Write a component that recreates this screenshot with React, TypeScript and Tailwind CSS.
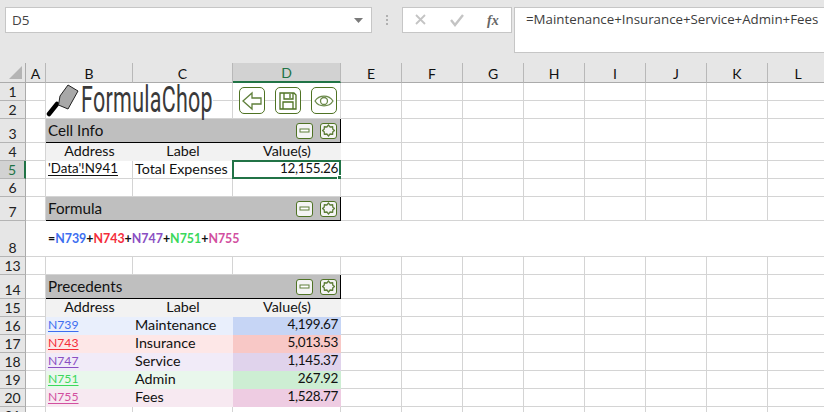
import type { ReactNode } from 'react';

const COLS = ['A', 'B', 'C', 'D', 'E', 'F', 'G', 'H', 'I', 'J', 'K', 'L', 'M'];

const PRECEDENTS = [
  { row: 16, addr: 'N739', label: 'Maintenance', value: '4,199.67', link: 'text-[#3d6ef0]', light: 'bg-[#e9effc]', dark: 'bg-[#c6d5f5]' },
  { row: 17, addr: 'N743', label: 'Insurance', value: '5,013.53', link: 'text-[#f42d3a]', light: 'bg-[#fde7e7]', dark: 'bg-[#f8c8c6]' },
  { row: 18, addr: 'N747', label: 'Service', value: '1,145.37', link: 'text-[#8a4fc3]', light: 'bg-[#f1ebf8]', dark: 'bg-[#e0d3ec]' },
  { row: 19, addr: 'N751', label: 'Admin', value: '267.92', link: 'text-[#3bd85b]', light: 'bg-[#e9f7ec]', dark: 'bg-[#cdeed3]' },
  { row: 20, addr: 'N755', label: 'Fees', value: '1,528.77', link: 'text-[#d24f9f]', light: 'bg-[#f7e9f1]', dark: 'bg-[#eecce2]' },
];

function RowHead({ n, active }: { n: number; active?: boolean }) {
  return (
    <div
      className={`flex items-end justify-center text-[14px] leading-[17px] border-b border-[#b4b4b4] ${
        active
          ? 'bg-[#d2d2d2] text-[#217346] border-r-2 border-r-[#217346]'
          : 'bg-[#e6e6e6] text-[#222] border-r border-r-[#ababab]'
      }`}
    >
      {n}
    </div>
  );
}

function Blank({ children, className = '' }: { children?: ReactNode; className?: string }) {
  return <div className={`relative bg-white border-r border-b border-[#d4d4d4] ${className}`}>{children}</div>;
}

function Blanks({ count }: { count: number }) {
  return (
    <>
      {Array.from({ length: count }, (_, i) => (
        <Blank key={i} />
      ))}
    </>
  );
}

function TableHead() {
  return (
    <>
      <div className="flex items-center justify-center bg-[#f2f2f2] pb-[4px]">Address</div>
      <div className="flex items-center justify-center bg-[#f2f2f2] pb-[4px]">Label</div>
      <div className="flex items-center justify-center bg-[#f2f2f2] pb-[4px]">Value(s)</div>
    </>
  );
}

function SmallButton({ children }: { children: ReactNode }) {
  return (
    <div className="flex h-[16px] w-[17px] items-center justify-center rounded-[3px] border border-[#4f7324] bg-[#f4f4f4]">
      {children}
    </div>
  );
}

function TitleBar({ title }: { title: string }) {
  return (
    <div className="col-span-3 -ml-px -mt-px flex items-center justify-between border border-black bg-[#bfbfbf] pl-[2px] pr-[3px] text-[15.200px]">
      <span>{title}</span>
      <div className="flex gap-[7px]">
        <SmallButton>
          <svg width="11" height="5" viewBox="0 0 11 5">
            <rect x="1" y="1" width="9" height="3" fill="#fff" stroke="#5f7f3a" />
          </svg>
        </SmallButton>
        <SmallButton>
          <svg width="13" height="13" viewBox="0 0 24 24" fill="none" stroke="#5f7f3a" strokeWidth="2.5">
            <path d="M12 2l3 3.5 4.5-.5.5 4.5L23 12l-3 2.500-.5 4.500-4.500-.5L12 22l-3-3.500-4.500.5-.5-4.500L1 12l3-2.500.5-4.500 4.500.5z" />
          </svg>
        </SmallButton>
      </div>
    </div>
  );
}

function ToolButton({ children }: { children: ReactNode }) {
  return (
    <div className="flex h-[27px] w-[26px] items-center justify-center rounded-[5px] border border-[#4f7324] bg-white">
      {children}
    </div>
  );
}

function Logo() {
  return (
    <div className="absolute left-0 top-0 z-10 flex h-[35px] w-[167px] items-start bg-white">
      <svg width="34" height="35" viewBox="0 0 34 35" className="shrink-0">
        <path d="M3 31 L11 21" stroke="#000" strokeWidth="4.5" strokeLinecap="round" />
        <path d="M12.500 22 L14 13 L22 2 L32 8 L22 26 Z" fill="#a8a8a8" stroke="#222" strokeWidth="1" />
      </svg>
      <span className="ml-[1px] origin-left scale-x-[0.58] text-[37px] leading-[34px] tracking-[0.5px] text-[#3a3a3a] [font-family:Roboto,sans-serif]">
        FormulaChop
      </span>
    </div>
  );
}

function CellLink({ children, className = '' }: { children: ReactNode; className?: string }) {
  return <span className={`underline underline-offset-2 ${className}`}>{children}</span>;
}

function Num({ children }: { children: ReactNode }) {
  return <span className="text-[13.500px] tracking-[-0.35px]">{children}</span>;
}

export default function App() {
  return (
    <div className="flex h-[412px] w-[824px] flex-col overflow-hidden bg-[#e6e6e6] text-[14.300px] leading-[17px] text-[#111] [font-family:Lato,sans-serif]">
      {/* ribbon: name box + formula bar */}
      <div className="flex h-[63px] shrink-0 items-start pl-[5px] pt-[7px] text-[13.500px] text-[#444] [font-family:'Open_Sans',sans-serif]">
        <div className="flex h-[26px] w-[367px] items-center justify-between border border-[#c6c6c6] bg-white pl-[6px] pr-[8px]">
          <span>D5</span>
          <svg width="9" height="5" viewBox="0 0 9 5">
            <path d="M0 0h9L4.500 5z" fill="#7a7a7a" />
          </svg>
        </div>
        <div className="flex h-[26px] w-[30px] flex-col items-center justify-center gap-[2px]">
          <i className="h-[2px] w-[2px] bg-[#b0b0b0]" />
          <i className="h-[2px] w-[2px] bg-[#b0b0b0]" />
          <i className="h-[2px] w-[2px] bg-[#b0b0b0]" />
        </div>
        <div className="flex h-[26px] w-[110px] items-center border border-[#c6c6c6] bg-white">
          <svg width="108" height="24" viewBox="0 0 108 24">
            <path d="M13 7l9 9M22 7l-9 9" stroke="#c4c4c4" strokeWidth="1.800" fill="none" />
            <path d="M48 12l4 5 8-10" stroke="#c4c4c4" strokeWidth="2.400" fill="none" />
            <text x="84" y="17" fontSize="14" fontStyle="italic" fontWeight="700" fontFamily="Liberation Serif, serif" fill="#666">
              fx
            </text>
          </svg>
        </div>
        <div className="ml-[2px] flex h-[46px] flex-1 border border-r-0 border-[#c6c6c6] bg-white pl-[11px] pt-[3px] text-[13.300px] text-[#3d3d3d]">
          =Maintenance+Insurance+Service+Admin+Fees
        </div>
      </div>

      {/* sheet */}
      <div className="grid grid-cols-[26px_20px_87px_100px_108px_repeat(9,61px)] grid-rows-[20px_18px_18px_24px_18px_18px_18px_24px_36px_18px_24px_18px_18px_18px_18px_18px_18px_18px]">
        {/* column headers */}
        <div className="relative border-r border-b border-[#ababab]">
          <svg width="14" height="14" viewBox="0 0 14 14" className="absolute left-[9px] top-[3px]">
            <path d="M13 0v13H0z" fill="#b4b4b4" />
          </svg>
        </div>
        {COLS.map((c) => (
          <div
            key={c}
            className={`flex items-end justify-center border-r border-[#b8b8b8] text-[14px] leading-[17px] ${
              c === 'D'
                ? 'border-b-2 border-b-[#217346] bg-[#d2d2d2] text-[#217346]'
                : 'border-b border-b-[#ababab] text-[#111]'
            }`}
          >
            {c}
          </div>
        ))}

        {/* rows 1-2: logo and toolbar */}
        <RowHead n={1} />
        <Blank />
        <Blank>
          <Logo />
        </Blank>
        <Blank />
        <Blank>
          <div className="absolute left-[6px] top-[4px] z-10 flex gap-[10px]">
            <ToolButton>
              <svg width="22" height="20" viewBox="0 0 22 20" fill="none" stroke="#5f7f3a" strokeWidth="1.300">
                <path d="M2 10l9-8v5h9v6h-9v5z" />
              </svg>
            </ToolButton>
            <ToolButton>
              <svg width="20" height="20" viewBox="0 0 20 20" fill="none" stroke="#4f7324" strokeWidth="1.300">
                <path d="M2 2h14l2 2v14H2z" />
                <path d="M6 2v6h9V2M12 3v4" />
                <path d="M5 18v-7h10v7" />
              </svg>
            </ToolButton>
            <ToolButton>
              <svg width="20" height="14" viewBox="0 0 20 14" fill="none" stroke="#6b8a4a" strokeWidth="1.300">
                <path d="M1 7c4-6.500 14-6.500 18 0-4 6.500-14 6.500-18 0z" />
                <circle cx="10" cy="7" r="3.500" />
              </svg>
            </ToolButton>
          </div>
        </Blank>
        <Blanks count={9} />

        <RowHead n={2} />
        <Blanks count={13} />

        {/* cell info */}
        <RowHead n={3} />
        <Blank />
        <TitleBar title="Cell Info" />
        <Blanks count={9} />

        <RowHead n={4} />
        <Blank />
        <TableHead />
        <Blanks count={9} />

        <RowHead n={5} active />
        <Blank />
        <Blank className="flex items-center pb-[2px] pl-[2px]">
          <CellLink className="text-[13.300px]">'Data'!N941</CellLink>
        </Blank>
        <Blank className="flex items-center pb-[2px] pl-[2px]">Total Expenses</Blank>
        <Blank className="flex items-center justify-end pb-[2px] pr-[2px]">
          <Num>12,155.26</Num>
          <div className="absolute -left-px -top-px -bottom-px -right-px border-2 border-[#217346]" />
          <div className="absolute -bottom-[3px] -right-[3px] h-[6px] w-[6px] border border-white bg-[#217346]" />
        </Blank>
        <Blanks count={9} />

        <RowHead n={6} />
        <Blanks count={13} />

        {/* formula */}
        <RowHead n={7} />
        <Blank />
        <TitleBar title="Formula" />
        <Blanks count={9} />

        <RowHead n={8} />
        <Blank className="col-span-13 flex items-center pl-[22px] text-[12.400px] font-bold">
          =<span className="text-[#3d6ef0]">N739</span>+<span className="text-[#f42d3a]">N743</span>+
          <span className="text-[#8a4fc3]">N747</span>+<span className="text-[#3bd85b]">N751</span>+
          <span className="text-[#d24f9f]">N755</span>
        </Blank>

        <RowHead n={13} />
        <Blanks count={13} />

        {/* precedents */}
        <RowHead n={14} />
        <Blank />
        <TitleBar title="Precedents" />
        <Blanks count={9} />

        <RowHead n={15} />
        <Blank />
        <TableHead />
        <Blanks count={9} />

        {PRECEDENTS.map((p) => (
          <div key={p.row} className="contents">
            <RowHead n={p.row} />
            <Blank />
            <div className={`flex items-center pb-[4px] pl-[2px] ${p.light}`}>
              <CellLink className={`text-[12.200px] ${p.link}`}>{p.addr}</CellLink>
            </div>
            <div className={`flex items-center pb-[4px] pl-[2px] ${p.light}`}>{p.label}</div>
            <div className={`flex items-center justify-end pb-[4px] pr-[3px] ${p.dark}`}>
              <Num>{p.value}</Num>
            </div>
            <Blanks count={9} />
          </div>
        ))}

        <RowHead n={21} />
        <Blanks count={13} />
      </div>
    </div>
  );
}
